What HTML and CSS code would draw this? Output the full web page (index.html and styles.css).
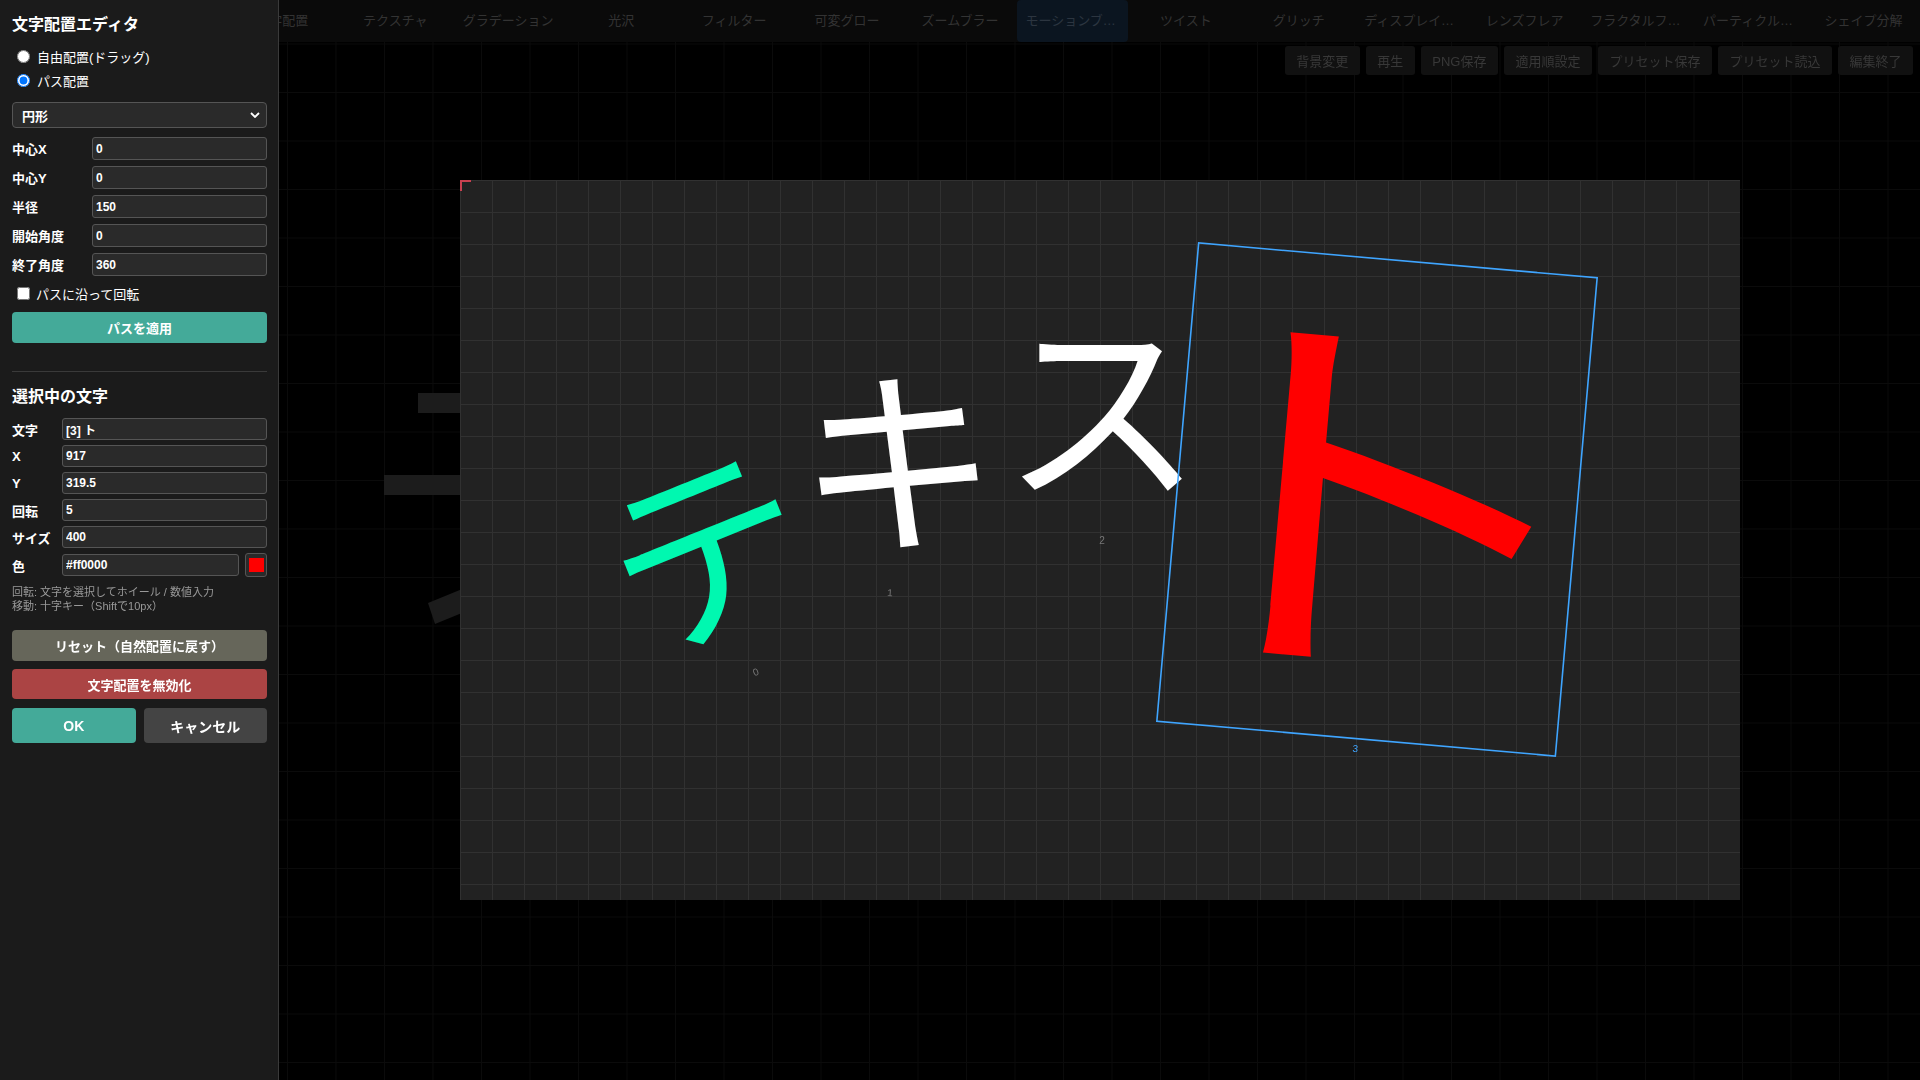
FILE: index.html
```html
<!DOCTYPE html>
<html lang="ja">
<head>
<meta charset="utf-8">
<title>文字配置エディタ</title>
<link rel="stylesheet" href="styles.css">
</head>
<body>
<div class="app">
  <nav class="tabs">
    <div class="tab">基本設定</div>
    <div class="tab">アウトライン</div>
    <div class="tab">文字配置</div>
    <div class="tab">テクスチャ</div>
    <div class="tab">グラデーション</div>
    <div class="tab">光沢</div>
    <div class="tab">フィルター</div>
    <div class="tab">可変グロー</div>
    <div class="tab">ズームブラー</div>
    <div class="tab active">モーションブラー</div>
    <div class="tab">ツイスト</div>
    <div class="tab">グリッチ</div>
    <div class="tab">ディスプレイスメント</div>
    <div class="tab">レンズフレア</div>
    <div class="tab">フラクタルフレーム</div>
    <div class="tab">パーティクル散布</div>
    <div class="tab">シェイプ分解</div>
  </nav>
  <div class="workspace">
    <div class="toolbar">
      <button class="tool-btn">背景変更</button>
      <button class="tool-btn">再生</button>
      <button class="tool-btn">PNG保存</button>
      <button class="tool-btn">適用順設定</button>
      <button class="tool-btn">プリセット保存</button>
      <button class="tool-btn">プリセット読込</button>
      <button class="tool-btn">編集終了</button>
    </div>
    <svg class="ghost" width="1920" height="1038" viewBox="0 0 1920 1038">
      <rect x="418" y="351" width="60" height="20" fill="#1c1c1c"/>
      <rect x="384" y="433" width="90" height="20" fill="#1c1c1c"/>
      <polygon points="428,561 472,543 479,564 435,582" fill="#1c1c1c"/>
    </svg>
  </div>
</div>

<div class="editor">
  <aside class="panel">
    <h1 class="panel-title">文字配置エディタ</h1>
    <label class="radio-row"><input type="radio" name="mode">自由配置(ドラッグ)</label>
    <label class="radio-row"><input type="radio" name="mode" checked>パス配置</label>
    <div class="select">
      <span>円形</span>
      <svg width="10" height="6" viewBox="0 0 10 6"><path d="M1 1l4 4 4-4" fill="none" stroke="#fff" stroke-width="1.8"/></svg>
    </div>
    <div class="fields">
      <label class="field"><span class="field-label">中心X</span><input class="text-input" value="0"></label>
      <label class="field"><span class="field-label">中心Y</span><input class="text-input" value="0"></label>
      <label class="field"><span class="field-label">半径</span><input class="text-input" value="150"></label>
      <label class="field"><span class="field-label">開始角度</span><input class="text-input" value="0"></label>
      <label class="field"><span class="field-label">終了角度</span><input class="text-input" value="360"></label>
    </div>
    <label class="check-row"><input type="checkbox">パスに沿って回転</label>
    <button class="btn btn-teal btn-apply">パスを適用</button>
    <div class="divider"></div>
    <h2 class="section-title">選択中の文字</h2>
    <div class="fields fields-compact">
      <label class="field"><span class="field-label">文字</span><input class="text-input" value="[3] ト"></label>
      <label class="field"><span class="field-label">X</span><input class="text-input" value="917"></label>
      <label class="field"><span class="field-label">Y</span><input class="text-input" value="319.5"></label>
      <label class="field"><span class="field-label">回転</span><input class="text-input" value="5"></label>
      <label class="field"><span class="field-label">サイズ</span><input class="text-input" value="400"></label>
      <div class="field field-color"><span class="field-label">色</span><input class="text-input" value="#ff0000"><span class="swatch"><span class="swatch-fill"></span></span></div>
    </div>
    <p class="hint">回転: 文字を選択してホイール / 数値入力<br>移動: 十字キー（Shiftで10px）</p>
    <button class="btn btn-olive btn-reset">リセット（自然配置に戻す）</button>
    <button class="btn btn-red btn-disable">文字配置を無効化</button>
    <div class="btn-pair">
      <button class="btn btn-teal btn-big">OK</button>
      <button class="btn btn-gray btn-big">キャンセル</button>
    </div>
  </aside>

  <main class="stage">
    <svg class="board" width="1280" height="720" viewBox="0 0 1280 720">
      <defs>
        <pattern id="grid" width="32" height="32" patternUnits="userSpaceOnUse">
          <path d="M0 0.5H32M0.5 0V32" fill="none" stroke="#313131" stroke-width="1"/>
        </pattern>
      </defs>
      <rect width="1280" height="720" fill="#222"/>
      <rect width="1280" height="720" fill="url(#grid)"/>
      <path d="M1 11V1H11" fill="none" stroke="#c8404f" stroke-width="2"/>
      <g class="glyphs" text-anchor="middle" dominant-baseline="central">
        <g transform="translate(247 371.5) rotate(-22)">
          <text class="glyph" y="-12" font-size="200" fill="#00f8b0">テ</text>
          <text class="idx" y="130">0</text>
        </g>
        <g transform="translate(439 283) rotate(4)">
          <text class="glyph" y="-12" font-size="200" fill="#ffffff">キ</text>
          <text class="idx" y="130">1</text>
        </g>
        <g transform="translate(642 230)">
          <text class="glyph" y="-12" font-size="200" fill="#ffffff">ス</text>
          <text class="idx" y="130">2</text>
        </g>
        <g transform="translate(917 319.5) rotate(5)">
          <text class="glyph" transform="translate(-16 -24) scale(1.24 1)" font-size="400" fill="#ff0000">ト</text>
          <rect x="-200" y="-240" width="400" height="480" fill="none" stroke="#3fa5ff" stroke-width="1.6"/>
          <text class="idx idx-sel" y="250">3</text>
        </g>
      </g>
    </svg>
  </main>
</div>
</body>
</html>
```

FILE: styles.css
```css
html, body {
  margin: 0;
  padding: 0;
}

body {
  width: 1920px;
  height: 1080px;
  overflow: hidden;
  background: #000;
  color: #fff;
  font-family: "Liberation Sans", "Noto Sans CJK JP", sans-serif;
}

/* ---------- background application (dimmed) ---------- */
.app {
  height: 1080px;
  display: flex;
  flex-direction: column;
}

.tabs {
  flex: none;
  display: flex;
  height: 42px;
  background: #0a0a0a;
}

.tab {
  flex: 1 1 0;
  min-width: 0;
  margin: 0 1px;
  padding: 0 8px;
  line-height: 42px;
  font-size: 13px;
  color: #333;
  text-align: center;
  white-space: nowrap;
  overflow: hidden;
  text-overflow: ellipsis;
}

.tab.active {
  background: #0b1520;
  border-radius: 4px;
  color: #2c3540;
}

.workspace {
  flex: 1;
  position: relative;
  background-color: #000;
  background-image:
    linear-gradient(to right, #0b0b0b 1px, transparent 1px),
    linear-gradient(to bottom, #0b0b0b 1px, transparent 1px);
  background-size: 48.5px 48.5px;
  background-position: 44.5px 1.5px;
}

.toolbar {
  position: relative;
  z-index: 1;
  display: flex;
  justify-content: flex-end;
  gap: 6px;
  padding: 4px 7px 0;
}

.tool-btn {
  height: 29px;
  padding: 0 11.5px;
  border: none;
  border-radius: 3px;
  background: #111;
  color: #383838;
  font-family: inherit;
  font-size: 13px;
}

.ghost {
  position: absolute;
  left: 0;
  top: 0;
}

/* ---------- editor overlay ---------- */
.editor {
  position: fixed;
  inset: 0;
  display: flex;
}

.panel {
  flex: none;
  width: 279px;
  height: 1080px;
  box-sizing: border-box;
  padding: 14px 11px 0 12px;
  background: #1b1b1b;
  border-right: 1px solid #3a3a3a;
}

.panel-title {
  margin: 0;
  font-size: 16px;
  line-height: 22px;
  font-weight: bold;
}

.radio-row {
  display: flex;
  align-items: center;
  height: 24px;
  font-size: 13px;
}

.radio-row:first-of-type {
  margin-top: 8px;
}

.radio-row input {
  margin: 0 7px 0 5px;
}

.select {
  margin-top: 10px;
  height: 26px;
  box-sizing: border-box;
  display: flex;
  align-items: center;
  justify-content: space-between;
  padding: 0 6px 0 9px;
  border: 1px solid #555;
  border-radius: 4px;
  background: #2a2a2a;
  font-size: 13px;
  font-weight: bold;
}

.fields {
  margin-top: 9px;
  display: flex;
  flex-direction: column;
  gap: 6px;
}

.field {
  display: grid;
  grid-template-columns: 80px 1fr;
  align-items: center;
  height: 23px;
}

.field-label {
  font-size: 13px;
  font-weight: bold;
}

.text-input {
  width: 100%;
  height: 23px;
  box-sizing: border-box;
  margin: 0;
  padding: 0 3px;
  border: 1px solid #555;
  border-radius: 3px;
  background: #2a2a2a;
  color: #fff;
  font-family: inherit;
  font-size: 12px;
  font-weight: bold;
  outline: none;
}

.check-row {
  margin-top: 7px;
  display: flex;
  align-items: center;
  height: 20px;
  font-size: 13px;
}

.check-row input {
  margin: 0 6px 0 5px;
}

.btn {
  display: block;
  width: 100%;
  margin: 0;
  padding: 0;
  border: none;
  border-radius: 4px;
  color: #fff;
  font-family: inherit;
  font-size: 13px;
  font-weight: bold;
}

.btn-teal { background: #44aa99; }
.btn-olive { background: #66665a; }
.btn-red { background: #ab4444; }
.btn-gray { background: #444; }

.btn-apply {
  margin-top: 9px;
  height: 31px;
}

.divider {
  margin-top: 28px;
  height: 1px;
  background: #3a3a3a;
}

.section-title {
  margin: 14px 0 0;
  font-size: 16px;
  line-height: 22px;
  font-weight: bold;
}

.fields-compact {
  margin-top: 10px;
  gap: 5px;
}

.fields-compact .field {
  grid-template-columns: 50px 1fr;
  height: 22px;
}

.fields-compact .text-input {
  height: 22px;
}

.fields-compact .field-color {
  grid-template-columns: 50px 1fr 28px;
  height: 24px;
}

.swatch {
  justify-self: end;
  width: 22px;
  height: 24px;
  box-sizing: border-box;
  display: flex;
  align-items: center;
  justify-content: center;
  border: 1px solid #555;
  border-radius: 3px;
  background: #2a2a2a;
}

.swatch-fill {
  width: 15px;
  height: 14px;
  background: #f00;
}

.hint {
  margin: 8px 0 0;
  font-size: 11px;
  line-height: 14px;
  color: #999;
}

.btn-reset {
  margin-top: 17px;
  height: 31px;
}

.btn-disable {
  margin-top: 8px;
  height: 30px;
}

.btn-pair {
  margin-top: 9px;
  display: grid;
  grid-template-columns: 1fr 1fr;
  gap: 8px;
}

.btn-big {
  height: 35px;
  font-size: 14px;
}

/* ---------- canvas stage ---------- */
.stage {
  flex: 1;
  display: flex;
  align-items: center;
  justify-content: center;
}

.board {
  display: block;
}

.glyph {
  font-family: "Noto Sans CJK JP", sans-serif;
}

.idx {
  font-family: "Liberation Sans", sans-serif;
  font-size: 10px;
  fill: #777;
}

.idx-sel {
  fill: #3fa5ff;
}
```
